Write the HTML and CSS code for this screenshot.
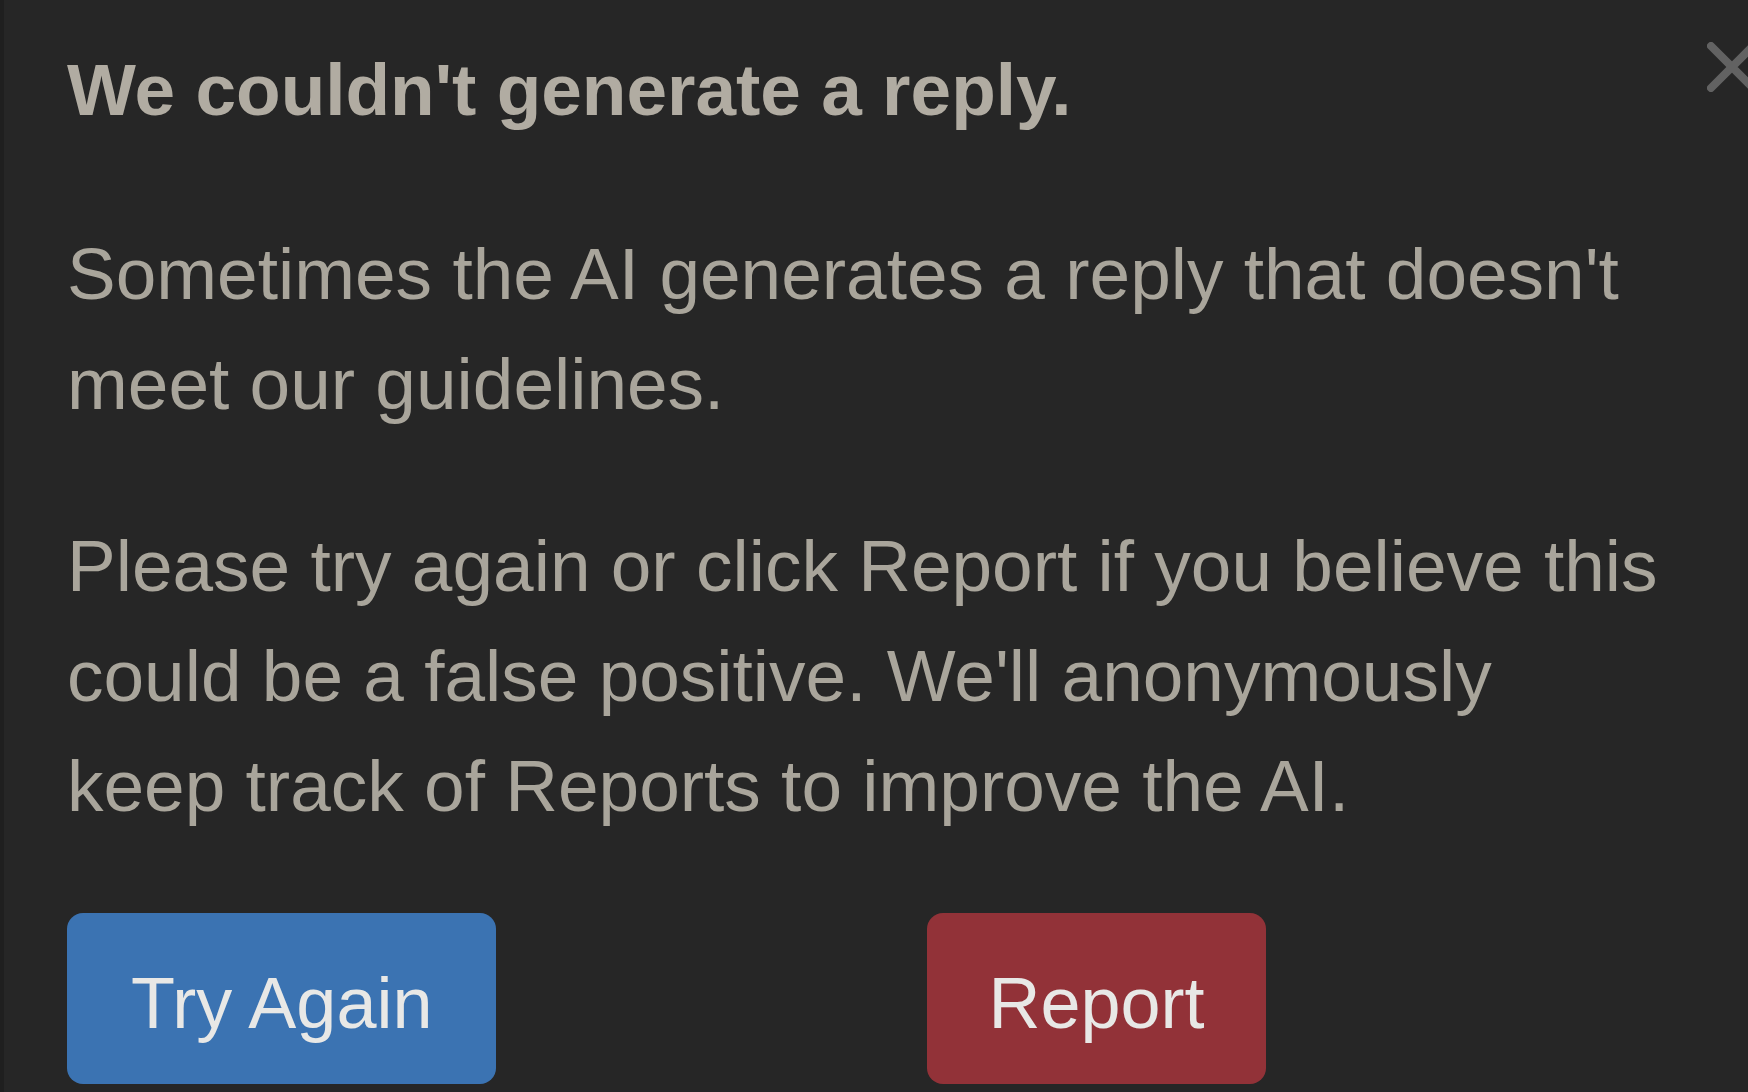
FILE: index.html
```html
<!DOCTYPE html>
<html lang="en">
<head>
<meta charset="utf-8">
<title>We couldn't generate a reply.</title>
<link rel="stylesheet" href="styles.css">
</head>
<body>
<div class="dialog">
  <button class="close" aria-label="Close">
    <svg width="50" height="50" viewBox="0 0 50 50"><path d="M4 4 L46 46 M46 4 L4 46" stroke="#626262" stroke-width="8" stroke-linecap="round" fill="none"/></svg>
  </button>
  <h1 class="title">We couldn't generate a reply.</h1>
  <p class="text">Sometimes the AI generates a reply that doesn't<br>meet our guidelines.</p>
  <p class="text text-second">Please try again or click Report if you believe this<br>could be a false positive. We'll anonymously<br>keep track of Reports to improve the AI.</p>
  <div class="actions">
    <button class="btn btn-primary">Try Again</button>
    <button class="btn btn-danger">Report</button>
  </div>
</div>
</body>
</html>
```
FILE: styles.css
```css
html, body {
  margin: 0;
  padding: 0;
  background: #262626;
  overflow: hidden;
}
.dialog {
  position: relative;
  box-sizing: border-box;
  height: 1092px;
  border-left: 4px solid #1f1f1f;
  padding: 48px 0 0 63px;
  font-family: "Liberation Sans", Arial, sans-serif;
}
.close {
  position: absolute;
  left: 1703px;
  top: 42px;
  width: 50px;
  height: 50px;
  padding: 0;
  border: 0;
  background: none;
}
.close svg { display: block; }
.title {
  margin: 0;
  font-size: 73px;
  font-weight: 700;
  line-height: 84px;
  color: #b1aca2;
  white-space: nowrap;
}
.text {
  margin: 87px 0 0 0;
  font-size: 73px;
  line-height: 110px;
  color: #a9a59b;
  white-space: nowrap;
}
.text-second {
  margin-top: 72px;
}
.actions {
  display: flex;
  gap: 431px;
  margin-top: 72px;
}
.btn {
  box-sizing: border-box;
  height: 171px;
  padding: 9px 61px 0 61px;
  line-height: 162px;
  border: 0;
  border-radius: 16px;
  font-family: "Liberation Sans", Arial, sans-serif;
  font-size: 72px;
  color: #e8e8e6;
}
.btn-primary {
  padding-left: 64px;
  padding-right: 64px;
  background: #3b73b2;
}
.btn-danger { background: #923238; }
```
